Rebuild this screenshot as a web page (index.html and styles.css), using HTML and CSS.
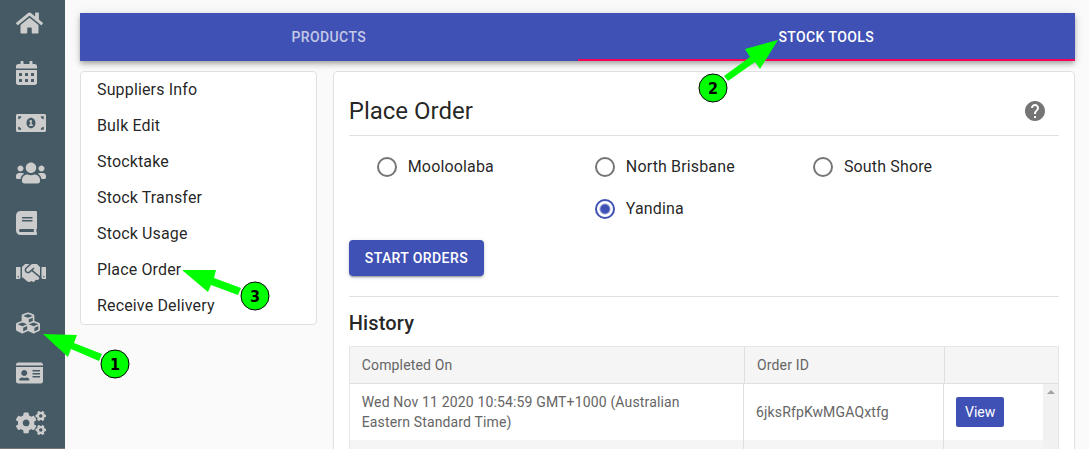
FILE: index.html
```html
<!DOCTYPE html>
<html lang="en">
  <head>
    <meta charset="UTF-8" />
    <meta name="viewport" content="width=device-width, initial-scale=1.0" />
    <title>Place Order</title>
    <link rel="stylesheet" href="styles.css">
  </head>
  <body>
    <nav class="sidebar" aria-label="Main">
      <a href="#" aria-label="Home">
        <svg viewBox="0 0 576 512"><path d="M280.37 148.26L96 300.11V464a16 16 0 0 0 16 16l112.06-.29a16 16 0 0 0 15.92-16V368a16 16 0 0 1 16-16h64a16 16 0 0 1 16 16v95.64a16 16 0 0 0 16 16.05L464 480a16 16 0 0 0 16-16V300L295.67 148.26a12.19 12.19 0 0 0-15.3 0zM571.6 251.47L488 182.56V44.05a12 12 0 0 0-12-12h-56a12 12 0 0 0-12 12v72.61L318.47 43a48 48 0 0 0-61 0L4.34 251.47a12 12 0 0 0-1.6 16.9l25.5 31A12 12 0 0 0 45.15 301l235.22-193.74a12.19 12.19 0 0 1 15.3 0L530.9 301a12 12 0 0 0 16.9-1.6l25.5-31a12 12 0 0 0-1.7-16.93z"/></svg>
      </a>
      <a href="#" aria-label="Calendar">
        <svg viewBox="0 0 448 512"><path d="M0 464c0 26.5 21.5 48 48 48h352c26.5 0 48-21.5 48-48V192H0v272zm320-196c0-6.600 5.400-12 12-12h40c6.600 0 12 5.400 12 12v40c0 6.600-5.400 12-12 12h-40c-6.600 0-12-5.400-12-12v-40zm0 128c0-6.600 5.400-12 12-12h40c6.600 0 12 5.400 12 12v40c0 6.600-5.400 12-12 12h-40c-6.600 0-12-5.400-12-12v-40zm-128-128c0-6.600 5.400-12 12-12h40c6.600 0 12 5.400 12 12v40c0 6.600-5.400 12-12 12h-40c-6.600 0-12-5.400-12-12v-40zm0 128c0-6.600 5.400-12 12-12h40c6.600 0 12 5.400 12 12v40c0 6.600-5.400 12-12 12h-40c-6.600 0-12-5.400-12-12v-40zM64 268c0-6.600 5.400-12 12-12h40c6.600 0 12 5.400 12 12v40c0 6.600-5.400 12-12 12H76c-6.600 0-12-5.400-12-12v-40zm0 128c0-6.600 5.400-12 12-12h40c6.600 0 12 5.400 12 12v40c0 6.600-5.400 12-12 12H76c-6.600 0-12-5.400-12-12v-40zM400 64h-48V16c0-8.800-7.200-16-16-16h-32c-8.800 0-16 7.200-16 16v48H160V16c0-8.800-7.200-16-16-16h-32c-8.800 0-16 7.200-16 16v48H48C21.500 64 0 85.500 0 112v48h448v-48c0-26.500-21.500-48-48-48z"/></svg>
      </a>
      <a href="#" aria-label="Payments">
        <svg viewBox="0 0 640 512"><path d="M352 288h-16v-88c0-4.420-3.580-8-8-8h-13.580c-4.740 0-9.370 1.400-13.310 4.030l-15.330 10.220a7.994 7.994 0 0 0-2.220 11.090l8.880 13.310a7.994 7.994 0 0 0 11.090 2.220l.47-.31V288h-16c-4.420 0-8 3.580-8 8v16c0 4.420 3.580 8 8 8h64c4.420 0 8-3.580 8-8v-16c0-4.420-3.580-8-8-8zM608 64H32C14.330 64 0 78.330 0 96v320c0 17.670 14.330 32 32 32h576c17.670 0 32-14.330 32-32V96c0-17.670-14.330-32-32-32zM48 400v-64c35.350 0 64 28.650 64 64H48zm0-224v-64h64c0 35.350-28.650 64-64 64zm272 192c-53.020 0-96-50.150-96-112 0-61.860 42.980-112 96-112s96 50.140 96 112c0 61.870-43 112-96 112zm272 32h-64c0-35.350 28.650-64 64-64v64zm0-224c-35.350 0-64-28.650-64-64h64v64z"/></svg>
      </a>
      <a href="#" aria-label="Customers">
        <svg viewBox="0 0 640 512"><path d="M96 224c35.300 0 64-28.700 64-64s-28.700-64-64-64-64 28.700-64 64 28.700 64 64 64zm448 0c35.300 0 64-28.700 64-64s-28.700-64-64-64-64 28.700-64 64 28.700 64 64 64zm32 32h-64c-17.600 0-33.500 7.100-45.100 18.600 40.300 22.100 68.900 62 75.100 109.400h66c17.700 0 32-14.300 32-32v-32c0-35.300-28.700-64-64-64zm-256 0c61.900 0 112-50.100 112-112S381.900 32 320 32 208 82.100 208 144s50.100 112 112 112zm76.800 32h-8.300c-20.800 10-43.900 16-68.500 16s-47.600-6-68.500-16h-8.300C179.600 288 128 339.600 128 403.200V432c0 26.500 21.500 48 48 48h288c26.500 0 48-21.500 48-48v-28.800c0-63.600-51.600-115.200-115.200-115.200zm-223.700-13.400C161.500 263.100 145.600 256 128 256H64c-35.300 0-64 28.700-64 64v32c0 17.700 14.300 32 32 32h65.900c6.300-47.400 34.900-87.300 75.200-109.400z"/></svg>
      </a>
      <a href="#" aria-label="Reports">
        <svg viewBox="0 0 448 512"><path d="M448 360V24c0-13.300-10.700-24-24-24H96C43 0 0 43 0 96v320c0 53 43 96 96 96h328c13.300 0 24-10.700 24-24v-16c0-7.500-3.500-14.300-8.900-18.700-4.200-15.400-4.200-59.300 0-74.700 5.400-4.300 8.900-11.100 8.900-18.600zM128 134c0-3.300 2.700-6 6-6h212c3.300 0 6 2.700 6 6v20c0 3.300-2.700 6-6 6H134c-3.300 0-6-2.700-6-6v-20zm0 64c0-3.300 2.700-6 6-6h212c3.300 0 6 2.700 6 6v20c0 3.300-2.700 6-6 6H134c-3.300 0-6-2.700-6-6v-20zm253.400 250H96c-17.700 0-32-14.300-32-32 0-17.600 14.400-32 32-32h285.400c-1.900 17.100-1.900 46.900 0 64z"/></svg>
      </a>
      <a href="#" aria-label="Suppliers">
        <svg viewBox="0 0 640 512"><path d="M434.700 64h-85.900c-8 0-15.700 3-21.600 8.400l-98.300 90c-.1.1-.2.3-.3.4-16.600 15.600-16.300 40.500-2.100 56 12.700 13.900 39.400 17.600 56.100 2.700.1-.1.3-.1.4-.2l79.900-73.200c6.500-5.900 16.700-5.500 22.600 1 6 6.500 5.500 16.600-1 22.600l-26.100 23.900L504 313.800c2.900 2.400 5.500 5 7.900 7.700V128l-54.600-54.600c-5.900-6-14.100-9.400-22.600-9.400zM544 128.200v223.900c0 17.700 14.300 32 32 32h64V128.200h-96zm48 223.900c-8.800 0-16-7.200-16-16s7.200-16 16-16 16 7.200 16 16-7.200 16-16 16zM0 384h64c17.700 0 32-14.300 32-32V128.200H0V384zm48-63.900c8.800 0 16 7.200 16 16s-7.200 16-16 16-16-7.200-16-16c0-8.900 7.200-16 16-16zm435.900 18.600L334.600 217.500l-30 27.500c-29.700 27.100-75.200 24.500-101.700-4.400-26.900-29.400-24.800-74.900 4.400-101.700L289.100 64h-83.800c-8.500 0-16.600 3.400-22.600 9.400L128 128v223.900h18.300l90.500 81.900c27.400 22.300 67.700 18.100 90-9.300l.2-.2 17.900 15.500c15.900 13 39.400 10.500 52.300-5.400l31.400-38.600 5.400 4.400c13.700 11.100 33.900 9.100 45-4.700l9.500-11.700c11.200-13.800 9.100-33.900-4.600-45.100z"/></svg>
      </a>
      <a href="#" aria-label="Stock">
        <svg viewBox="0 0 512 512"><path d="M488.600 250.200L392 214V105.500c0-15-9.300-28.400-23.400-33.700l-100-37.500c-8.100-3.100-17.100-3.100-25.300 0l-100 37.500c-14.100 5.300-23.400 18.700-23.400 33.700V214l-96.600 36.200C9.300 255.500 0 268.900 0 283.900V394c0 13.600 7.700 26.100 19.900 32.200l100 50c10.100 5.100 22.100 5.100 32.200 0l103.900-52 103.900 52c10.100 5.100 22.100 5.100 32.200 0l100-50c12.200-6.100 19.900-18.600 19.900-32.200V283.900c0-15-9.300-28.400-23.400-33.700zM358 214.800l-85 31.900v-68.200l85-37v73.300zM154 104.100l102-38.200 102 38.200v.6l-102 41.400-102-41.400v-.6zm84 291.100l-85 42.500v-79.100l85-38.800v75.400zm0-112l-102 41.400-102-41.400v-.6l102-38.200 102 38.200v.6zm240 112l-85 42.500v-79.100l85-38.800v75.400zm0-112l-102 41.400-102-41.400v-.6l102-38.200 102 38.200v.6z"/></svg>
      </a>
      <a href="#" aria-label="Staff">
        <svg viewBox="0 0 576 512"><path d="M528 32H48C21.500 32 0 53.500 0 80v16h576V80c0-26.500-21.500-48-48-48zM0 432c0 26.500 21.500 48 48 48h480c26.500 0 48-21.500 48-48V128H0v304zm352-232c0-4.400 3.600-8 8-8h144c4.400 0 8 3.600 8 8v16c0 4.400-3.600 8-8 8H360c-4.400 0-8-3.600-8-8v-16zm0 64c0-4.400 3.600-8 8-8h144c4.400 0 8 3.600 8 8v16c0 4.400-3.600 8-8 8H360c-4.400 0-8-3.600-8-8v-16zm0 64c0-4.400 3.600-8 8-8h144c4.400 0 8 3.600 8 8v16c0 4.400-3.600 8-8 8H360c-4.400 0-8-3.600-8-8v-16zM176 192c35.300 0 64 28.700 64 64s-28.700 64-64 64-64-28.700-64-64 28.700-64 64-64zM67.100 396.200C75.500 370.500 99.600 352 128 352h8.200c12.300 5.100 25.700 8 39.800 8s27.600-2.900 39.800-8h8.200c28.400 0 52.500 18.500 60.900 44.200 3.200 9.900-5.200 19.800-15.600 19.800H82.700c-10.400 0-18.800-10-15.600-19.800z"/></svg>
      </a>
      <a href="#" aria-label="Settings">
        <svg viewBox="0 0 640 512">
          <path id="small-cog" d="M512.100 191l-8.200 14.300c-3 5.300-9.400 7.500-15.100 5.400-11.800-4.400-22.600-10.700-32.100-18.600-4.600-3.800-5.800-10.500-2.800-15.700l8.200-14.300c-6.900-8-12.300-17.300-15.900-27.400h-16.500c-6 0-11.200-4.300-12.200-10.300-2-12-2.100-24.600 0-37.100 1-6 6.200-10.400 12.200-10.400h16.500c3.600-10.100 9-19.400 15.900-27.400l-8.200-14.300c-3-5.200-1.900-11.900 2.800-15.700 9.500-7.900 20.400-14.200 32.100-18.600 5.700-2.100 12.100.1 15.100 5.400l8.200 14.300c10.500-1.900 21.200-1.900 31.700 0L552 6.300c3-5.300 9.400-7.500 15.100-5.400 11.800 4.400 22.600 10.700 32.100 18.600 4.600 3.800 5.800 10.500 2.800 15.700l-8.200 14.300c6.900 8 12.300 17.300 15.900 27.400h16.500c6 0 11.200 4.300 12.200 10.300 2 12 2.100 24.600 0 37.100-1 6-6.200 10.400-12.200 10.400h-16.500c-3.600 10.100-9 19.400-15.900 27.400l8.200 14.300c3 5.200 1.900 11.900-2.800 15.700-9.500 7.900-20.400 14.200-32.100 18.600-5.700 2.100-12.100-.1-15.100-5.400l-8.200-14.300c-10.400 1.900-21.200 1.900-31.700 0zm-10.500-58.800c38.500 29.600 82.400-14.300 52.800-52.800-38.500-29.700-82.400 14.300-52.800 52.800z"/>
          <use href="#small-cog" y="299"/>
          <path d="M386.300 286.100l33.700 16.800c10.100 5.800 14.500 18.100 10.500 29.100-8.900 24.200-26.400 46.400-42.600 65.800-7.400 8.900-20.200 11.100-30.300 5.300l-29.100-16.800c-16 13.700-34.600 24.600-54.900 31.700v33.600c0 11.600-8.300 21.600-19.700 23.600-24.600 4.200-50.400 4.400-75.900 0-11.500-2-20-11.900-20-23.600V418c-20.300-7.200-38.900-18-54.900-31.700L74 403c-10 5.800-22.900 3.600-30.300-5.300-16.200-19.400-33.300-41.600-42.200-65.700-4-10.900.4-23.200 10.500-29.100l33.300-16.800c-3.900-20.900-3.900-42.400 0-63.400L12 205.800c-10.100-5.800-14.600-18.100-10.500-29 8.900-24.200 26-46.400 42.200-65.800 7.400-8.900 20.200-11.100 30.300-5.300l29.100 16.800c16-13.700 34.600-24.600 54.900-31.700V57.100c0-11.500 8.200-21.500 19.600-23.500 24.600-4.200 50.500-4.400 76-.1 11.500 2 20 11.900 20 23.600v33.600c20.300 7.200 38.900 18 54.900 31.700l29.100-16.800c10-5.800 22.900-3.600 30.300 5.300 16.200 19.400 33.200 41.600 42.100 65.800 4 10.900.1 23.200-10 29.100l-33.700 16.800c3.900 21 3.900 42.500 0 63.500zm-117.600 21.100c59.200-77-28.700-164.900-105.700-105.700-59.200 77 28.700 164.900 105.700 105.700z"/>
        </svg>
      </a>
    </nav>

    <main class="content">
      <div class="tabs" role="tablist">
        <button class="tab" role="tab" aria-selected="false">PRODUCTS</button>
        <button class="tab active" role="tab" aria-selected="true">STOCK TOOLS</button>
      </div>

      <div class="columns">
        <nav class="card menu" aria-label="Stock tools">
          <a href="#">Suppliers Info</a>
          <a href="#">Bulk Edit</a>
          <a href="#">Stocktake</a>
          <a href="#">Stock Transfer</a>
          <a href="#">Stock Usage</a>
          <a href="#">Place Order</a>
          <a href="#">Receive Delivery</a>
        </nav>

        <section class="card panel">
          <header class="panel-header">
            <h1>Place Order</h1>
            <button class="help" aria-label="Help">
              <svg viewBox="0 0 24 24"><path d="M12 2C6.480 2 2 6.480 2 12s4.480 10 10 10 10-4.480 10-10S17.520 2 12 2zm1 17h-2v-2h2v2zm2.070-7.750l-.9.920C13.450 12.900 13 13.500 13 15h-2v-.5c0-1.100.45-2.100 1.170-2.830l1.240-1.260c.37-.36.59-.86.59-1.410 0-1.100-.9-2-2-2s-2 .9-2 2H8c0-2.210 1.790-4 4-4s4 1.790 4 4c0 .88-.36 1.680-.93 2.250z"/></svg>
            </button>
          </header>

          <form>
            <div class="stores">
              <label><input type="radio" name="store">Mooloolaba</label>
              <label><input type="radio" name="store">North Brisbane</label>
              <label><input type="radio" name="store">South Shore</label>
              <label><input type="radio" name="store" checked>Yandina</label>
            </div>
            <button class="start" type="button">START ORDERS</button>
          </form>

          <h2>History</h2>
          <div class="grid">
            <table class="grid-head">
              <tr>
                <th>Completed On</th>
                <th class="col-id">Order ID</th>
                <th class="col-action"></th>
              </tr>
            </table>
            <div class="grid-body">
              <table>
                <tr>
                  <td>Wed Nov 11 2020 10:54:59 GMT+1000 (Australian Eastern Standard Time)</td>
                  <td class="col-id">6jksRfpKwMGAQxtfg</td>
                  <td class="col-action"><button class="view">View</button></td>
                </tr>
                <tr>
                  <td></td>
                  <td></td>
                  <td></td>
                </tr>
              </table>
              <div class="scrollbar"></div>
            </div>
          </div>
        </section>
      </div>
    </main>

    <!-- numbered steps -->
    <svg class="step step-1" width="90" height="50" viewBox="0 0 90 50">
      <path d="M3 4l34 1-3 8 28 11-3 7-28-12-3 8z"/>
      <circle cx="75" cy="34" r="14"/>
      <text x="75" y="40">1</text>
    </svg>
    <svg class="step step-2" width="90" height="70" viewBox="0 0 90 70">
      <path d="M83 5L50 14l5 8-26 19 4 5 27-19 5 7z"/>
      <circle cx="18" cy="53" r="14"/>
      <text x="18" y="59">2</text>
    </svg>
    <svg class="step step-3" width="90" height="50" viewBox="0 0 90 50">
      <path d="M2 4h34l-2 8 27 10-3 7-27-10-3 7z"/>
      <circle cx="75" cy="30" r="14"/>
      <text x="75" y="36">3</text>
    </svg>
  </body>
</html>
```
FILE: styles.css
```css
* {
  box-sizing: border-box;
}

body {
  display: flex;
  position: relative;
  height: 100vh;
  margin: 0;
  overflow: hidden;
  background: #fafafa;
  color: rgba(0, 0, 0, 0.87);
  font-family: Roboto, 'Liberation Sans', sans-serif;
  font-size: 16px;
  letter-spacing: 0.00938em;
}

a {
  color: inherit;
  text-decoration: none;
}

button {
  border: none;
  font-family: inherit;
  cursor: pointer;
}

/* sidebar */
.sidebar {
  display: flex;
  flex-direction: column;
  flex: none;
  gap: 26px;
  width: 65px;
  padding: 11px 16px 0;
  background: #455a64;
  border-bottom: 1px solid #757575;
}

.sidebar a {
  height: 24px;
}

.sidebar svg {
  display: block;
  height: 24px;
  fill: #ccc;
}

/* content */
.content {
  flex: 1;
  padding: 13px 14px 0 15px;
}

.tabs {
  display: flex;
  height: 48px;
  background: #3f51b5;
  box-shadow: 0 2px 4px -1px rgba(0, 0, 0, 0.2),
    0 4px 5px 0 rgba(0, 0, 0, 0.14), 0 1px 10px 0 rgba(0, 0, 0, 0.12);
}

.tab {
  flex: 1;
  padding: 0;
  background: none;
  color: rgba(255, 255, 255, 0.7);
  font-size: 14px;
  font-weight: 500;
  letter-spacing: 0.02857em;
}

.tab.active {
  color: #fff;
  box-shadow: inset 0 -2px #f50057;
}

.columns {
  display: grid;
  grid-template-columns: repeat(12, 1fr);
  gap: 16px;
  align-items: start;
  margin-top: 10px;
}

.card {
  background: #fff;
  border: 1px solid #e0e0e0;
  border-radius: 4px;
}

.menu {
  display: flex;
  flex-direction: column;
  grid-column: span 3;
}

.menu a {
  padding: 0 16px;
  line-height: 36px;
}

.panel {
  grid-column: span 9;
  padding: 15px;
}

.panel-header {
  display: flex;
  justify-content: space-between;
  align-items: center;
  border-bottom: 1px solid #e0e0e0;
}

h1 {
  margin: 0;
  font-size: 24px;
  font-weight: 400;
  letter-spacing: 0;
}

.help {
  height: 48px;
  padding: 12px;
  background: none;
}

.help svg {
  display: block;
  width: 24px;
  fill: #757575;
}

form {
  padding: 10px 0 20px;
  border-bottom: 1px solid #e0e0e0;
}

.stores {
  display: flex;
  flex-wrap: wrap;
  justify-content: center;
  padding: 0 28px;
  margin-bottom: 10px;
}

.stores label {
  display: flex;
  align-items: center;
  width: calc(100% / 3);
  height: 42px;
  line-height: 24px;
  cursor: pointer;
}

.stores input {
  appearance: none;
  width: 20px;
  height: 20px;
  margin: 0 11px 0 0;
  border: 2px solid #757575;
  border-radius: 50%;
}

.stores input:checked {
  border-color: #3f51b5;
  background: radial-gradient(circle, #3f51b5 4px, transparent 6px);
}

.start {
  display: block;
  height: 36px;
  padding: 0 16px;
  background: #3f51b5;
  border-radius: 4px;
  box-shadow: 0 3px 1px -2px rgba(0, 0, 0, 0.2),
    0 2px 2px 0 rgba(0, 0, 0, 0.14), 0 1px 5px 0 rgba(0, 0, 0, 0.12);
  color: #fff;
  font-size: 14px;
  font-weight: 500;
  letter-spacing: 0.02857em;
}

h2 {
  margin: 10px 0 7px;
  font-size: 20px;
  font-weight: 500;
  line-height: 32px;
  letter-spacing: 0.0075em;
}

/* history grid */
.grid {
  border: 1px solid #e6e6e6;
  color: #656565;
  font-size: 14px;
  line-height: 20px;
}

.grid table {
  width: 100%;
  table-layout: fixed;
  border-spacing: 0;
}

.grid th,
.grid td {
  padding: 8px 12px;
  font-weight: 400;
  text-align: left;
}

.grid th + th,
.grid td + td {
  border-left: 1px solid #e0e0e0;
}

.grid .col-id {
  width: 200px;
}

.grid .col-action {
  width: 100px;
}

.grid-head th {
  height: 37px;
  background: #f5f5f5;
  border-bottom: 1px solid #e0e0e0;
}

.grid-head .col-action {
  width: 114px;
}

.grid-body {
  display: flex;
}

.grid-body td {
  height: 56px;
}

.grid-body tr:nth-child(even) {
  background: #f5f5f5;
}

.scrollbar {
  flex: none;
  width: 15px;
  background: #f1f1f1;
}

.scrollbar::before {
  content: '';
  display: block;
  width: 0;
  margin: 6px auto;
  border: 4px solid transparent;
  border-top: none;
  border-bottom-color: #a3a3a3;
}

.view {
  display: block;
  height: 30px;
  padding: 0 9px;
  background: #3f51b5;
  border-radius: 2px;
  color: #fff;
  font-size: 14px;
}

/* numbered steps */
.step {
  position: absolute;
  pointer-events: none;
  fill: #0f0;
}

.step circle {
  stroke: #000;
}

.step text {
  fill: #000;
  font: bold 16px 'DejaVu Sans Condensed', 'DejaVu Sans', sans-serif;
  text-anchor: middle;
}

.step-1 {
  top: 330px;
  left: 40px;
}

.step-2 {
  top: 35px;
  left: 695px;
}

.step-3 {
  top: 266px;
  left: 180px;
}
```
